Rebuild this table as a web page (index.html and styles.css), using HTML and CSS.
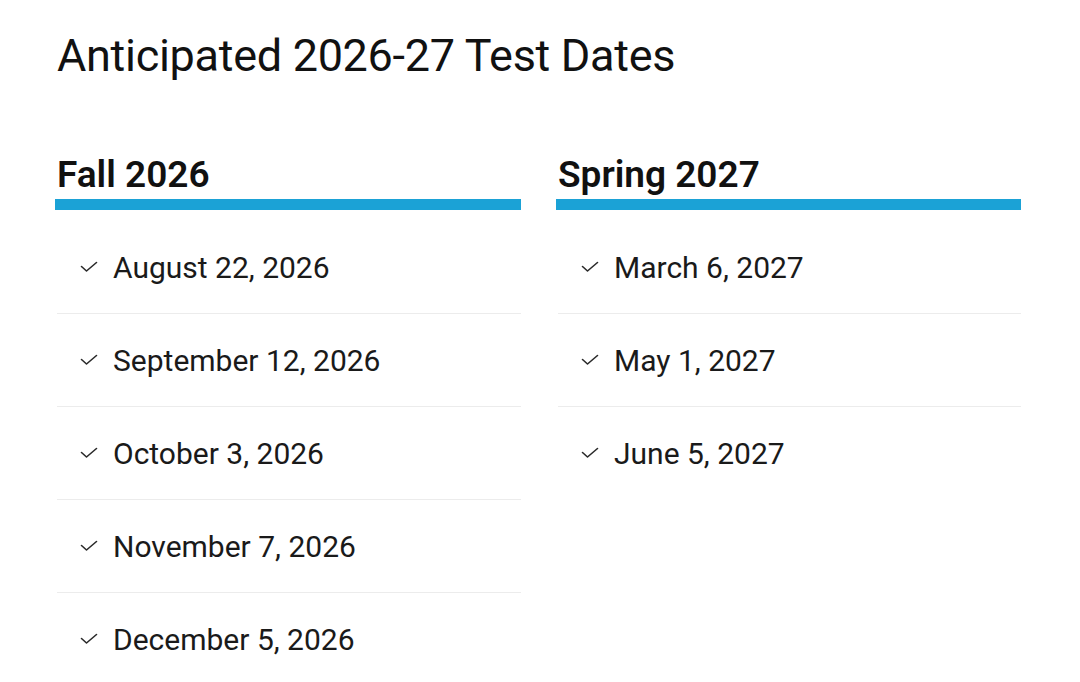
FILE: index.html
```html
<!DOCTYPE html>
<html lang="en">
<head>
<meta charset="utf-8">
<title>Anticipated 2026-27 Test Dates</title>
<link rel="stylesheet" href="styles.css">
</head>
<body>
<main class="page">
  <h1 class="title">Anticipated 2026-27 Test Dates</h1>
  <div class="columns">
    <section class="col">
      <h2 class="col-head">Fall 2026</h2>
      <ul class="dates">
        <li class="date"><svg class="check" viewBox="0 0 18 12"><path d="M1.5 5.5 L6.5 10 L16.5 1.5"/></svg><span>August 22, 2026</span></li>
        <li class="date"><svg class="check" viewBox="0 0 18 12"><path d="M1.5 5.5 L6.5 10 L16.5 1.5"/></svg><span>September 12, 2026</span></li>
        <li class="date"><svg class="check" viewBox="0 0 18 12"><path d="M1.5 5.5 L6.5 10 L16.5 1.5"/></svg><span>October 3, 2026</span></li>
        <li class="date"><svg class="check" viewBox="0 0 18 12"><path d="M1.5 5.5 L6.5 10 L16.5 1.5"/></svg><span>November 7, 2026</span></li>
        <li class="date"><svg class="check" viewBox="0 0 18 12"><path d="M1.5 5.5 L6.5 10 L16.5 1.5"/></svg><span>December 5, 2026</span></li>
      </ul>
    </section>
    <section class="col">
      <h2 class="col-head">Spring 2027</h2>
      <ul class="dates">
        <li class="date"><svg class="check" viewBox="0 0 18 12"><path d="M1.5 5.5 L6.5 10 L16.5 1.5"/></svg><span>March 6, 2027</span></li>
        <li class="date"><svg class="check" viewBox="0 0 18 12"><path d="M1.5 5.5 L6.5 10 L16.5 1.5"/></svg><span>May 1, 2027</span></li>
        <li class="date"><svg class="check" viewBox="0 0 18 12"><path d="M1.5 5.5 L6.5 10 L16.5 1.5"/></svg><span>June 5, 2027</span></li>
      </ul>
    </section>
  </div>
</main>
</body>
</html>
```
FILE: styles.css
```css
html, body {
  margin: 0;
  padding: 0;
  background: #ffffff;
}
body {
  font-family: Roboto, "Liberation Sans", Arial, sans-serif;
  color: #161616;
  overflow: hidden;
}
.page {
  padding: 29px 0 0 55px;
  width: 966px;
}
.title {
  margin: 0 0 0 2px;
  font-size: 45px;
  line-height: 54px;
  font-weight: 400;
  color: #111;
  letter-spacing: -0.3px;
}
.columns {
  display: grid;
  grid-template-columns: 466px 465px;
  column-gap: 35px;
  margin-top: 70px;
}
.col-head {
  margin: 0;
  padding: 0 0 2px 2px;
  font-size: 37px;
  line-height: 44px;
  font-weight: 600;
  color: #111;
  border-bottom: 11px solid #1ba2d6;
}
.dates {
  list-style: none;
  margin: 11px 0 0 0;
  padding: 0;
}
.date {
  display: flex;
  align-items: center;
  height: 92px;
  border-bottom: 1px solid #ececec;
  margin-left: 2px;
  padding-left: 23px;
  font-size: 30px;
  color: #1a1a1a;
}
.date:last-child {
  border-bottom: none;
}
.check {
  width: 18px;
  height: 12px;
  margin-right: 15px;
  fill: none;
  stroke: #2a2a2a;
  stroke-width: 1.6;
  stroke-linecap: round;
  stroke-linejoin: round;
}
```
